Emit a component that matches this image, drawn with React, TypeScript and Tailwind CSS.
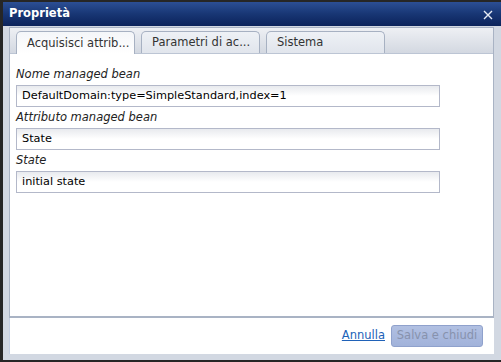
import React from 'react'

const font = { fontFamily: '"DejaVu Sans", Verdana, sans-serif' }

const tabs = ['Acquisisci attrib...', 'Parametri di ac...', 'Sistema']

const fields = [
  { label: 'Nome managed bean', value: 'DefaultDomain:type=SimpleStandard,index=1' },
  { label: 'Attributo managed bean', value: 'State' },
  { label: 'State', value: 'initial state' },
]

export default function App() {
  return (
    <div
      className="w-[501px] h-[362px] bg-[#262626] pl-[3px] pt-[2px] pb-[3px] flex flex-col"
      style={font}
    >
      <div className="flex-1 flex flex-col bg-[#d2d8e2]">
        {/* title bar */}
        <div className="h-[24px] flex items-center justify-between pl-[6px] pr-[8px] bg-gradient-to-b from-[#2c4f95] via-[#183674] to-[#0c235b]">
          <span className="text-white font-bold text-[11.5px] leading-none">Proprietà</span>
          <svg width="10" height="10" viewBox="0 0 10 10" className="mt-[1px]">
            <path d="M1 1 L9 9 M9 1 L1 9" stroke="#e8ecf4" strokeWidth="1.4" />
          </svg>
        </div>

        <div className="flex-1 flex flex-col pl-[6px] pr-[7px] pt-[1px] pb-[6px]">
          {/* tab panel */}
          <div className="h-[291px] flex flex-col border border-[#a9b3c4] border-b-2 bg-white">
            <div className="h-[26px] flex items-end gap-[6px] pl-[6px] bg-gradient-to-b from-[#eef0f4] to-[#d3d8e1] border-b border-[#bcc5d4]">
              {tabs.map((t, i) => (
                <div
                  key={t}
                  className={
                    i === 0
                      ? 'w-[119px] h-[23px] -mb-[1px] rounded-t-[5px] border border-b-0 border-[#a7b1c2] bg-gradient-to-b from-[#f4f6f9] to-white text-[#333] text-[11.5px] pl-[10px] pt-[3px]'
                      : 'w-[119px] h-[22px] rounded-t-[5px] border border-b-0 border-[#a7b1c2] bg-gradient-to-b from-[#eef1f6] to-[#e1e5ec] text-[#333] text-[11.5px] pl-[10px] pt-[2px]'
                  }
                >
                  {t}
                </div>
              ))}
            </div>
            <div className="flex-1 pt-[10px] pl-[6px] pr-[50px]">
              {fields.map((f) => (
                <div key={f.label}>
                  <div className="h-[21px] leading-[21px] italic text-[11.5px] text-[#222]">{f.label}</div>
                  <div className="h-[22px] w-[424px] border border-[#b3b8c9] bg-gradient-to-b from-[#e8eaee] via-white to-white flex items-center pl-[5px] pt-[1px] text-[11.3px] text-black">
                    {f.value}
                  </div>
                </div>
              ))}
            </div>
          </div>

          {/* footer */}
          <div className="h-[36px] bg-white border-l border-[#c5cfe2] flex items-center justify-end gap-[6px] pr-[11px]">
            <a className="text-[11.5px] text-[#2062b8] underline cursor-pointer">Annulla</a>
            <button className="w-[92px] h-[22px] rounded-[3px] border border-[#8fa1cc] bg-gradient-to-b from-[#b1c0e2] to-[#a1b2da] text-[11.5px] text-[#8792ad]">
              Salva e chiudi
            </button>
          </div>
        </div>
      </div>
    </div>
  )
}
